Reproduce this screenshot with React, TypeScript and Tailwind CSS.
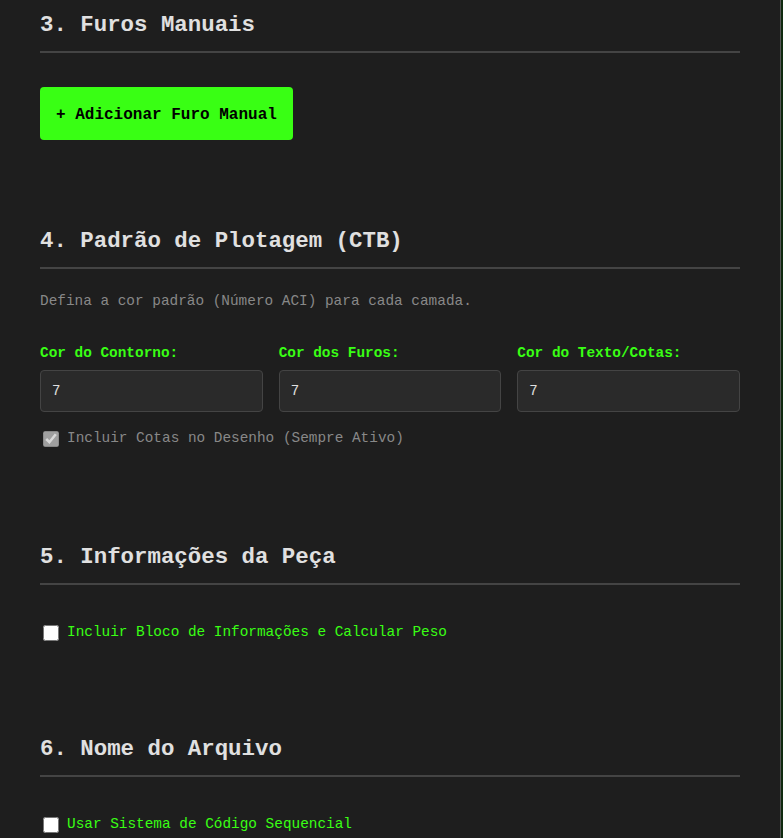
import React from "react";

const mono = { fontFamily: '"Liberation Mono", "DejaVu Sans Mono", monospace' };

function Heading({ children }: { children: React.ReactNode }) {
  return (
    <h2 className="text-[22.4px] leading-[28px] font-bold text-[#e0e0e0] pt-[2px] pb-[12px] border-b-2 border-[#444444]">
      {children}
    </h2>
  );
}

function Check({ label, checked, disabled }: { label: string; checked?: boolean; disabled?: boolean }) {
  return (
    <label className="flex items-center h-[20px] text-[14.4px]">
      <input
        type="checkbox"
        defaultChecked={checked}
        disabled={disabled}
        className="w-[16px] h-[16px] ml-[3px] mr-[8px]"
      />
      <span className={disabled ? "text-[#888888]" : "text-[#39ff14]"}>{label}</span>
    </label>
  );
}

function Field({ label }: { label: string }) {
  return (
    <div className="flex flex-col flex-1">
      <div className="text-[14.4px] leading-[20px] font-bold text-[#39ff14]">{label}</div>
      <input
        defaultValue="7"
        className="mt-[7px] h-[42px] w-full rounded-[4px] border border-[#444444] bg-[#2a2a2a] px-[11px] text-[14px] text-[#e0e0e0] outline-none"
        style={mono}
      />
    </div>
  );
}

export default function App() {
  return (
    <div className="flex w-[783px] h-[838px] overflow-hidden bg-[#1e1e1e]" style={mono}>
      <div className="w-[780px] px-[40px] pt-[9px]">
        <Heading>3. Furos Manuais</Heading>
        <button className="mt-[34px] h-[53px] px-[16px] pt-[3px] rounded-[4px] bg-[#39ff14] text-black font-bold text-[16px]">
          + Adicionar Furo Manual
        </button>

        <div className="mt-[85px]">
          <Heading>4. Padrão de Plotagem (CTB)</Heading>
          <p className="mt-[22px] text-[14.4px] leading-[20px] text-[#888888]">
            Defina a cor padrão (Número ACI) para cada camada.
          </p>
          <div className="mt-[32px] flex gap-[16px]">
            <Field label="Cor do Contorno:" />
            <Field label="Cor dos Furos:" />
            <Field label="Cor do Texto/Cotas:" />
          </div>
          <div className="mt-[17px]">
            <Check label="Incluir Cotas no Desenho (Sempre Ativo)" checked disabled />
          </div>
        </div>

        <div className="mt-[92px]">
          <Heading>5. Informações da Peça</Heading>
          <div className="mt-[38px]">
            <Check label="Incluir Bloco de Informações e Calcular Peso" />
          </div>
        </div>

        <div className="mt-[90px]">
          <Heading>6. Nome do Arquivo</Heading>
          <div className="mt-[38px]">
            <Check label="Usar Sistema de Código Sequencial" />
          </div>
        </div>
      </div>
      <div className="w-[1px] bg-[#555555]" />
      <div className="w-[2px] bg-[#0f2a0f]" />
    </div>
  );
}
